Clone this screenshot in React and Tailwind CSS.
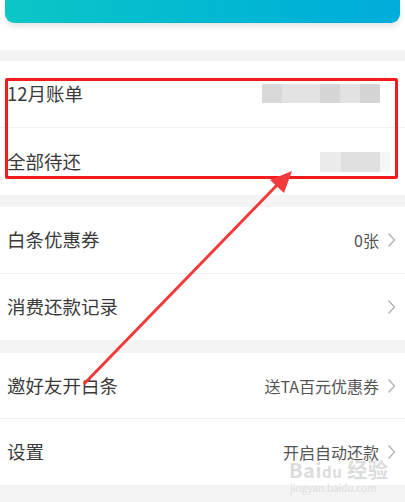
import React from "react";

const font = { fontFamily: '"Noto Sans CJK SC", "Noto Sans", sans-serif' };

function Chevron() {
  return (
    <svg width="9" height="16" viewBox="0 0 9 16" className="ml-2 shrink-0">
      <path d="M1.5 1.5 L7.5 8 L1.5 14.5" fill="none" stroke="#b0b0b0" strokeWidth="1.3" />
    </svg>
  );
}

function Row({ label, value, blur, divider, h = "h-[67px]" }) {
  return (
    <div className={`flex items-center justify-between ${h} pl-[7px] pr-[9px] ${divider ? "border-b border-[#f1f1f1]" : ""}`}>
      <span className="text-[18.5px] text-[#3a3a3a]">{label}</span>
      <div className="flex items-center">
        {blur}
        {value && <span className="text-[16px] text-[#555]">{value}</span>}
        {value !== undefined && <Chevron />}
      </div>
    </div>
  );
}

export default function App() {
  return (
    <div className="relative w-[405px] h-[502px] overflow-hidden bg-white" style={font}>
      <div className="h-[50px] px-[5px]">
        <div className="h-[23px] rounded-b-[9px] bg-gradient-to-r from-[#0cc6c6] to-[#01acdb] shadow-[0_3px_6px_rgba(0,0,0,0.12)]" />
      </div>

      <div className="h-[11px] bg-[#f4f4f4]" />
      <div>
        <Row
          label="12月账单"
          divider
          blur={
            <div className="flex h-[19px] mr-[16px] -mt-[2px]">
              <div className="w-[20px] bg-[#d9d9d9]" />
              <div className="w-[38px] bg-[#e3e3e3]" />
              <div className="w-[20px] bg-[#d6d6d6]" />
              <div className="w-[20px] bg-[#e2e2e2]" />
              <div className="w-[20px] bg-[#d4d4d4]" />
            </div>
          }
        />
        <Row
          label="全部待还"
          blur={
            <div className="flex h-[20px] mr-[6px]">
              <div className="w-[21px] bg-[#ececec]" />
              <div className="w-[39px] bg-[#e0e0e0]" />
              <div className="w-[10px] bg-[#f6f6f6]" />
            </div>
          }
        />
      </div>

      <div className="h-[12px] bg-[#f4f4f4]" />
      <div>
        <Row label="白条优惠券" value="0张" divider />
        <Row label="消费还款记录" value="" h="h-[66px]" />
      </div>

      <div className="h-[13px] bg-[#f4f4f4]" />
      <div>
        <Row label="邀好友开白条" value="送TA百元优惠券" divider h="h-[66px]" />
        <Row label="设置" value="开启自动还款" h="h-[66px]" />
      </div>
      <div className="h-[20px] bg-[#f4f4f4]" />

      <div className="absolute left-[5px] top-[78px] w-[393px] h-[101px] border-[3px] border-[#f21c1c] rounded-[2px]" />

      <svg className="absolute left-0 top-0" width="405" height="502">
        <line x1="84" y1="384" x2="280" y2="182" stroke="#f23a3a" strokeWidth="3" />
        <polygon points="292,171 270,180 284,193" fill="#f23a3a" />
      </svg>

      <div className="absolute left-[289px] top-[460px] text-[#dcdcdc] leading-none pointer-events-none">
        <div className="text-[20px] font-bold tracking-wide">
          Bai<span className="text-[15px]">du</span> 经验
        </div>
        <div className="text-[10px] mt-[3px] ml-[1px]">jingyan.baidu.com</div>
      </div>
    </div>
  );
}
